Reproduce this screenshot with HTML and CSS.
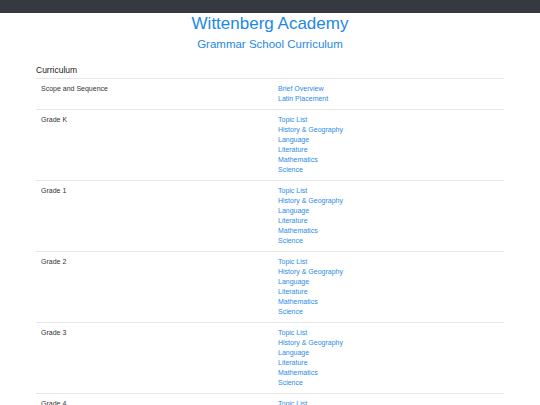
FILE: index.html
```html
<!DOCTYPE html>
<html>
<head>
<meta charset="utf-8">
<link rel="stylesheet" href="styles.css">
</head>
<body>
<div class="topbar"></div>
<header class="head">
  <h1 class="title">Wittenberg Academy</h1>
  <h2 class="subtitle">Grammar School Curriculum</h2>
</header>
<main class="container">
  <div class="section">Curriculum</div>
  <div class="row">
    <div class="label">Scope and Sequence</div>
    <div class="links"><a>Brief Overview</a><a>Latin Placement</a></div>
  </div>
  <div class="row">
    <div class="label">Grade K</div>
    <div class="links"><a>Topic List</a><a>History &amp; Geography</a><a>Language</a><a>Literature</a><a>Mathematics</a><a>Science</a></div>
  </div>
  <div class="row">
    <div class="label">Grade 1</div>
    <div class="links"><a>Topic List</a><a>History &amp; Geography</a><a>Language</a><a>Literature</a><a>Mathematics</a><a>Science</a></div>
  </div>
  <div class="row">
    <div class="label">Grade 2</div>
    <div class="links"><a>Topic List</a><a>History &amp; Geography</a><a>Language</a><a>Literature</a><a>Mathematics</a><a>Science</a></div>
  </div>
  <div class="row">
    <div class="label">Grade 3</div>
    <div class="links"><a>Topic List</a><a>History &amp; Geography</a><a>Language</a><a>Literature</a><a>Mathematics</a><a>Science</a></div>
  </div>
  <div class="row">
    <div class="label">Grade 4</div>
    <div class="links"><a>Topic List</a><a>History &amp; Geography</a><a>Language</a><a>Literature</a><a>Mathematics</a><a>Science</a></div>
  </div>
</main>
</body>
</html>
```
FILE: styles.css
```css
* { box-sizing: border-box; }
html, body { margin: 0; padding: 0; }
body {
  font-family: "Liberation Sans", Arial, sans-serif;
  color: #333;
  background: #fff;
}
.topbar {
  height: 13px;
  background: #343a40;
}
.head {
  text-align: center;
  color: #1e88e5;
}
.title {
  margin: 0;
  font-size: 17px;
  font-weight: normal;
  line-height: 22px;
}
.subtitle {
  margin: 0;
  font-size: 11.5px;
  font-weight: normal;
  line-height: 18px;
}
.container {
  margin: 0 36px;
  padding-top: 12px;
}
.section {
  font-size: 8.5px;
  line-height: 11px;
  padding-bottom: 2px;
  color: #222;
}
.row {
  display: grid;
  grid-template-columns: 237px 1fr;
  border-top: 1px solid #e6e6e6;
  padding: 5px 0;
  font-size: 7px;
  line-height: 10px;
}
.label {
  padding-left: 5px;
}
.links {
  display: flex;
  flex-direction: column;
  padding-left: 5px;
}
.links a {
  color: #2a8be8;
}
```
